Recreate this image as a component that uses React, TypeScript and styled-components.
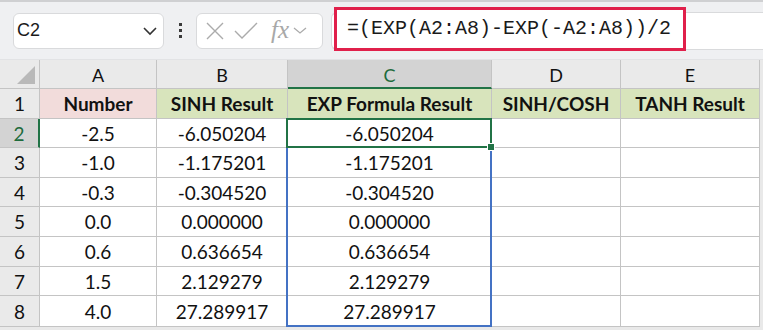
import { Fragment } from 'react';
import styled, { createGlobalStyle } from 'styled-components';

const GlobalStyle = createGlobalStyle`
  html, body {
    margin: 0;
    padding: 0;
    background: #ffffff;
  }
  body {
    width: 763px;
    height: 330px;
    overflow: hidden;
    font-family: 'Lato', 'Liberation Sans', sans-serif;
  }
`;

const COLS = [40, 117, 131, 204, 129, 139];
const ROW_HEIGHTS = [29, 30, 29, 30, 29, 30, 30, 29, 31];

const DATA = [
  ['-2.5', '-6.050204', '-6.050204'],
  ['-1.0', '-1.175201', '-1.175201'],
  ['-0.3', '-0.304520', '-0.304520'],
  ['0.0', '0.000000', '0.000000'],
  ['0.6', '0.636654', '0.636654'],
  ['1.5', '2.129279', '2.129279'],
  ['4.0', '27.289917', '27.289917']
];

const HEADERS = ['Number', 'SINH Result', 'EXP Formula Result', 'SINH/COSH', 'TANH Result'];

const Page = styled.div`
  width: 763px;
  height: 330px;
  display: flex;
  flex-direction: column;
  background: #e9e9e9;
`;

const Toolbar = styled.div`
  height: 57px;
  border-top: 2px solid #cfd0d2;
  background: #eff0f2;
  display: flex;
  align-items: center;
  padding-left: 13px;
  box-sizing: content-box;
  border-bottom: 1px solid #e2e3e5;
`;

const NameBox = styled.div`
  width: 151px;
  height: 36px;
  box-sizing: border-box;
  background: #ffffff;
  border: 1px solid #d9dadc;
  border-radius: 6px;
  display: flex;
  align-items: center;
  justify-content: space-between;
  padding: 0 5px 0 3px;
  font-family: 'Liberation Sans', Arial, sans-serif;
  font-size: 18px;
  color: #1a1a1a;
`;

const Dots = styled.div`
  width: 32px;
  display: flex;
  flex-direction: column;
  align-items: center;
  gap: 3px;
  span {
    width: 3px;
    height: 3px;
    background: #3a3a3a;
  }
`;

const FxBox = styled.div`
  width: 127px;
  height: 36px;
  box-sizing: border-box;
  background: #ffffff;
  border: 1px solid #d9dadc;
  border-radius: 6px;
  display: flex;
  align-items: center;
  padding-left: 8px;
  gap: 8px;
`;

const FxText = styled.span`
  font-family: 'Liberation Serif', 'DejaVu Serif', serif;
  font-style: italic;
  font-size: 25px;
  line-height: 1;
  color: #a8a8a8;
  margin-left: 4px;
  margin-right: -4px;
  margin-top: -2px;
`;

const FormulaWrap = styled.div`
  margin-left: 8px;
  height: 36px;
  flex: 1;
  background: #ffffff;
  border: 1px solid #d9dadc;
  border-right: none;
  border-radius: 6px 0 0 6px;
  position: relative;
`;

const Highlight = styled.div`
  position: absolute;
  left: 2px;
  top: -6px;
  width: 352px;
  height: 44px;
  box-sizing: border-box;
  border: 3px solid #e0204b;
  display: flex;
  align-items: center;
  padding-left: 10px;
  font-family: 'Liberation Mono', 'DejaVu Sans Mono', monospace;
  font-size: 20px;
  color: #1a1a1a;
  background: #ffffff;
`;

const Grid = styled.div`
  display: grid;
  grid-template-columns: ${COLS.map((c) => `${c}px`).join(' ')} 1fr;
  grid-template-rows: ${ROW_HEIGHTS.map((r) => `${r}px`).join(' ')};
  background: #ffffff;
`;

const Cell = styled.div<{ $bg?: string; $bold?: boolean }>`
  box-sizing: border-box;
  border-right: 1px solid #c4c4c4;
  border-bottom: 1px solid #c4c4c4;
  background: ${(p) => p.$bg || '#ffffff'};
  display: flex;
  align-items: center;
  justify-content: center;
  font-size: 19px;
  font-weight: ${(p) => (p.$bold ? 700 : 400)};
  color: #111111;
  position: relative;
`;

const ColHead = styled(Cell)<{ $active?: boolean }>`
  background: ${(p) => (p.$active ? '#d3d3d3' : '#eaeaea')};
  color: ${(p) => (p.$active ? '#1e6b3c' : '#111111')};
  border-bottom: ${(p) => (p.$active ? '2px solid #217346' : '1px solid #c4c4c4')};
  font-size: 18px;
  padding-top: 2px;
`;

const RowHead = styled(Cell)<{ $active?: boolean }>`
  background: ${(p) => (p.$active ? '#d3d3d3' : '#eaeaea')};
  color: ${(p) => (p.$active ? '#1e6b3c' : '#111111')};
  border-right: ${(p) => (p.$active ? '2px solid #217346' : '1px solid #c4c4c4')};
  font-size: 19px;
`;

const Corner = styled(Cell)`
  background: #eaeaea;
  &::after {
    content: '';
    position: absolute;
    right: 4px;
    bottom: 4px;
    width: 0;
    height: 0;
    border-left: 18px solid transparent;
    border-bottom: 18px solid #b9b9b9;
  }
`;

const Filler = styled.div`
  background: #e9e9e9;
`;

const Selection = styled.div`
  position: absolute;
  inset: -1px -1px -1px -2px;
  border: 2px solid #217346;
  pointer-events: none;
  z-index: 3;
  &::after {
    content: '';
    position: absolute;
    right: -5px;
    bottom: -5px;
    width: 6px;
    height: 6px;
    background: #217346;
    border: 1px solid #ffffff;
  }
`;

const RangeBox = styled.div<{ $last: boolean }>`
  position: absolute;
  top: -1px;
  bottom: -1px;
  left: -2px;
  right: -1px;
  border-left: 2px solid #4472c4;
  border-right: 2px solid #4472c4;
  border-bottom: ${(p) => (p.$last ? '2px solid #4472c4' : 'none')};
  pointer-events: none;
  z-index: 2;
`;

const Chevron = () => (
  <svg width="16" height="10" viewBox="0 0 16 10">
    <path d="M2 2 L8 8 L14 2" fill="none" stroke="#333" strokeWidth="1.6" />
  </svg>
);

export default function App() {
  return (
    <>
      <GlobalStyle />
      <Page>
        <Toolbar>
          <NameBox>
            <span>C2</span>
            <Chevron />
          </NameBox>
          <Dots>
            <span />
            <span />
            <span />
          </Dots>
          <FxBox>
            <svg width="20" height="20" viewBox="0 0 20 20">
              <path d="M2 2 L18 18 M18 2 L2 18" stroke="#ababab" strokeWidth="1.4" />
            </svg>
            <svg width="26" height="20" viewBox="0 0 26 20">
              <path d="M2 10 L9 17 L24 2" fill="none" stroke="#ababab" strokeWidth="1.4" />
            </svg>
            <FxText>fx</FxText>
            <svg width="14" height="9" viewBox="0 0 14 9">
              <path d="M1 2 L7 7 L13 2" fill="none" stroke="#ababab" strokeWidth="1.3" />
            </svg>
          </FxBox>
          <FormulaWrap>
            <Highlight>=(EXP(A2:A8)-EXP(-A2:A8))/2</Highlight>
          </FormulaWrap>
        </Toolbar>
        <Grid>
          <Corner />
          {['A', 'B', 'C', 'D', 'E'].map((l) => (
            <ColHead key={l} $active={l === 'C'}>
              {l}
            </ColHead>
          ))}
          <Filler />

          <RowHead>1</RowHead>
          {HEADERS.map((h, i) => (
            <Cell key={h} $bold $bg={i === 0 ? '#f2dcdb' : '#d8e4bc'}>
              {h}
            </Cell>
          ))}
          <Filler />

          {DATA.map((row, r) => (
            <Fragment key={r}>
              <RowHead $active={r === 0}>{r + 2}</RowHead>
              <Cell>{row[0]}</Cell>
              <Cell>{row[1]}</Cell>
              <Cell>
                {row[2]}
                <RangeBox $last={r === DATA.length - 1} />
                {r === 0 && <Selection />}
              </Cell>
              <Cell />
              <Cell />
              <Filler />
            </Fragment>
          ))}
        </Grid>
      </Page>
    </>
  );
}
